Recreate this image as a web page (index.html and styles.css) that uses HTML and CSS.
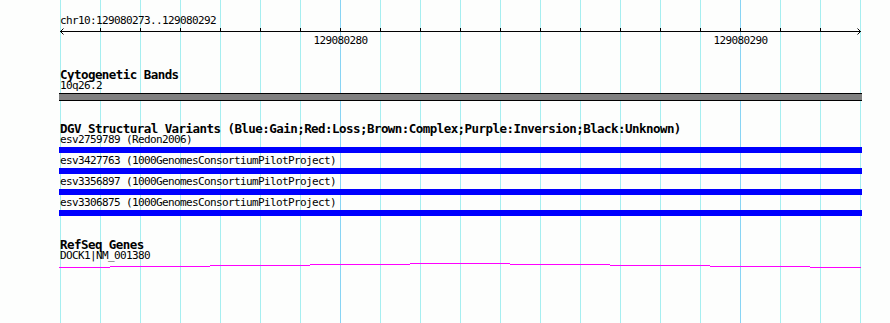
FILE: index.html
```html
<!DOCTYPE html>
<html>
<head>
<meta charset="utf-8">
<link rel="stylesheet" href="styles.css">
</head>
<body>
<div class="page">
  <div class="ruler">
    <div class="label ruler-title">chr10:129080273..129080292</div>
    <svg class="axis" width="890" height="20" viewBox="0 0 890 20">
      <g stroke="#000" stroke-width="1" shape-rendering="crispEdges" fill="none">
        <line x1="60" y1="5.5" x2="861" y2="5.5"/>
        <line x1="100.5" y1="2" x2="100.5" y2="6"/>
        <line x1="140.5" y1="2" x2="140.5" y2="6"/>
        <line x1="180.5" y1="2" x2="180.5" y2="6"/>
        <line x1="220.5" y1="2" x2="220.5" y2="6"/>
        <line x1="260.5" y1="2" x2="260.5" y2="6"/>
        <line x1="300.5" y1="2" x2="300.5" y2="6"/>
        <line x1="340.5" y1="2" x2="340.5" y2="6"/>
        <line x1="380.5" y1="2" x2="380.5" y2="6"/>
        <line x1="420.5" y1="2" x2="420.5" y2="6"/>
        <line x1="460.5" y1="2" x2="460.5" y2="6"/>
        <line x1="500.5" y1="2" x2="500.5" y2="6"/>
        <line x1="540.5" y1="2" x2="540.5" y2="6"/>
        <line x1="580.5" y1="2" x2="580.5" y2="6"/>
        <line x1="620.5" y1="2" x2="620.5" y2="6"/>
        <line x1="660.5" y1="2" x2="660.5" y2="6"/>
        <line x1="700.5" y1="2" x2="700.5" y2="6"/>
        <line x1="740.5" y1="2" x2="740.5" y2="6"/>
        <line x1="780.5" y1="2" x2="780.5" y2="6"/>
        <line x1="820.5" y1="2" x2="820.5" y2="6"/>
      </g>
      <polyline points="63.5,2.5 60.5,5.5 63.5,8.5" stroke="#000" fill="none" stroke-width="1"/>
      <polyline points="857.5,2.5 860.5,5.5 857.5,8.5" stroke="#000" fill="none" stroke-width="1"/>
      <text class="tick-label" x="340.5" y="18" text-anchor="middle">129080280</text>
      <text class="tick-label" x="740.5" y="18" text-anchor="middle">129080290</text>
    </svg>
  </div>

  <section class="track cyto">
    <div class="title">Cytogenetic Bands</div>
    <div class="label">10q26.2</div>
    <div class="band"></div>
  </section>

  <section class="track dgv">
    <div class="title">DGV Structural Variants (Blue:Gain;Red:Loss;Brown:Complex;Purple:Inversion;Black:Unknown)</div>
    <div class="row first">
      <div class="label">esv2759789 (Redon2006)</div>
      <div class="variant"></div>
    </div>
    <div class="row">
      <div class="label">esv3427763 (1000GenomesConsortiumPilotProject)</div>
      <div class="variant"></div>
    </div>
    <div class="row">
      <div class="label">esv3356897 (1000GenomesConsortiumPilotProject)</div>
      <div class="variant"></div>
    </div>
    <div class="row">
      <div class="label">esv3306875 (1000GenomesConsortiumPilotProject)</div>
      <div class="variant"></div>
    </div>
  </section>

  <section class="track refseq">
    <div class="title">RefSeq Genes</div>
    <div class="label">DOCK1|NM_001380</div>
    <svg class="gene" width="890" height="8" viewBox="0 0 890 8">
      <g stroke="#ff00ff" stroke-width="1" shape-rendering="crispEdges">
        <line x1="59" y1="6.5" x2="110" y2="6.5"/>
        <line x1="110" y1="5.5" x2="210" y2="5.5"/>
        <line x1="210" y1="4.5" x2="310" y2="4.5"/>
        <line x1="310" y1="3.5" x2="410" y2="3.5"/>
        <line x1="410" y1="2.5" x2="510" y2="2.5"/>
        <line x1="510" y1="3.5" x2="610" y2="3.5"/>
        <line x1="610" y1="4.5" x2="710" y2="4.5"/>
        <line x1="710" y1="5.5" x2="810" y2="5.5"/>
        <line x1="810" y1="6.5" x2="861" y2="6.5"/>
      </g>
    </svg>
  </section>
</div>
</body>
</html>
```

FILE: styles.css
```css
html, body {
  margin: 0;
  padding: 0;
  background: #fdfefd;
}

.page {
  position: relative;
  width: 890px;
  height: 323px;
  overflow: hidden;
  font-family: "DejaVu Sans Mono", "Liberation Mono", monospace;
  color: #000;
  background-color: #fdfefd;
  background-image:
    linear-gradient(#88d4f4, #88d4f4),
    linear-gradient(#88d4f4, #88d4f4),
    repeating-linear-gradient(to right, #a6eef0 0, #a6eef0 1px, transparent 1px, transparent 40px);
  background-size: 1px 100%, 1px 100%, 801px 100%;
  background-position: 340px 0, 740px 0, 60px 0;
  background-repeat: no-repeat;
}

.label {
  font-size: 11px;
  letter-spacing: -0.62px;
  line-height: 10px;
  height: 10px;
  padding-left: 60px;
  white-space: nowrap;
}

.title {
  font-size: 12.5px;
  letter-spacing: -0.55px;
  font-weight: bold;
  line-height: 12px;
  height: 12px;
  padding-left: 60px;
  white-space: nowrap;
}

.ruler-title {
  padding-top: 16px;
}

.axis,
.gene {
  display: block;
}

.tick-label {
  font-family: "DejaVu Sans Mono", "Liberation Mono", monospace;
  font-size: 11px;
  letter-spacing: -0.62px;
  fill: #000;
}

.track {
  display: flex;
  flex-direction: column;
}

.cyto {
  margin-top: 23px;
}

.band {
  margin: 2px 0 0 59px;
  width: 803px;
  height: 6px;
  background: #808080;
  border-top: 1px solid #000;
  border-bottom: 1px solid #000;
}

.dgv {
  margin-top: 22px;
}

.row {
  padding-top: 3px;
}

.row.first {
  padding-top: 0;
}

.variant {
  margin: 2px 0 0 59px;
  width: 803px;
  height: 6px;
  background: #0000ff;
}

.refseq {
  margin-top: 23px;
}
```
